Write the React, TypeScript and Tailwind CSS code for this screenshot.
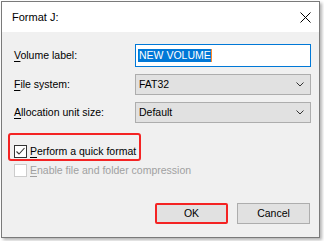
import React from "react";

const font = { fontFamily: '"Liberation Sans", Arial, sans-serif' };

function Chevron() {
  return (
    <svg width="8" height="5" viewBox="0 0 8 5" className="mr-[6px]">
      <polyline points="0.5,0.5 4,4 7.5,0.5" fill="none" stroke="#333" strokeWidth="1" />
    </svg>
  );
}

function Select({ value }: { value: string }) {
  return (
    <div className="h-[21px] flex items-center justify-between border border-[#adadad] bg-[#e1e1e1]">
      <span className="pl-[3px] text-[10.5px] text-black">{value}</span>
      <Chevron />
    </div>
  );
}

export default function App() {
  return (
    <div className="w-[324px] h-[241px] bg-white overflow-hidden" style={font}>
      <div className="ml-[1px] mt-[1px] w-[319px] h-[237px] border border-[#7a7a7a] flex flex-col shadow-[2px_2px_3px_rgba(0,0,0,0.3)]">
        <div className="h-[30px] bg-white flex items-center justify-between pl-[10px]">
          <span className="text-[11px] text-black">Format J:</span>
          <svg width="11" height="11" viewBox="0 0 11 11" className="mr-[8px]">
            <line x1="0.5" y1="0.5" x2="10.5" y2="10.5" stroke="#000" strokeWidth="1" />
            <line x1="10.5" y1="0.5" x2="0.5" y2="10.5" stroke="#000" strokeWidth="1" />
          </svg>
        </div>
        <div className="flex-1 bg-[#f0f0f0] flex flex-col pt-[12px] pl-[12px] pr-[8px] pb-[13px]">
          <div className="grid grid-cols-[121px_1fr] items-center">
            <span className="text-[10.5px] text-black">
              <u className="underline-offset-2">V</u>olume label:
            </span>
            <div className="h-[23px] border border-[#0078d7] bg-white flex items-center pl-[2px]">
              <span className="relative bg-[#0078d7] text-white text-[10.5px] leading-[13px] px-[1px]">
                NEW VOLUME
                <span className="absolute right-0 top-0 h-[13px] w-[1px] bg-[#ff8a28]" />
              </span>
            </div>
          </div>
          <div className="grid grid-cols-[121px_1fr] items-center mt-[7px]">
            <span className="text-[10.5px] text-black">
              <u className="underline-offset-2">F</u>ile system:
            </span>
            <Select value="FAT32" />
          </div>
          <div className="grid grid-cols-[121px_1fr] items-center mt-[7px]">
            <span className="text-[10.5px] text-black">
              <u className="underline-offset-2">A</u>llocation unit size:
            </span>
            <Select value="Default" />
          </div>

          <div className="mt-[10px] -ml-[6px] w-[133px] h-[28px] border-2 border-[#f42323] rounded-[3px] flex items-end pl-[4px] pb-[1px]">
            <div className="w-[13px] h-[13px] border border-[#333] bg-white flex items-center justify-center">
              <svg width="11" height="11" viewBox="0 0 11 11">
                <polyline points="1.5,5.5 4,8 9.5,2" fill="none" stroke="#333" strokeWidth="1.1" />
              </svg>
            </div>
            <span className="ml-[3px] text-[10.5px] leading-[13px] text-black">
              <u className="underline-offset-2">P</u>erform a quick format
            </span>
          </div>

          <div className="mt-[3px] flex items-center">
            <div className="w-[13px] h-[13px] border border-[#cccccc] bg-white" />
            <span className="ml-[3px] text-[10.5px] leading-[13px] text-[#a0a0a0]">
              <u className="underline-offset-2">E</u>nable file and folder compression
            </span>
          </div>

          <div className="flex-1" />

          <div className="flex justify-end gap-[9px] mr-[1px]">
            <div className="w-[73px] h-[21px] border-2 border-[#f42323] rounded-[2px] bg-[#e1e1e1] flex items-center justify-center text-[10.5px] text-black">
              OK
            </div>
            <div className="w-[73px] h-[21px] border border-[#adadad] bg-[#e1e1e1] flex items-center justify-center text-[10.5px] text-black">
              Cancel
            </div>
          </div>
        </div>
      </div>
    </div>
  );
}
